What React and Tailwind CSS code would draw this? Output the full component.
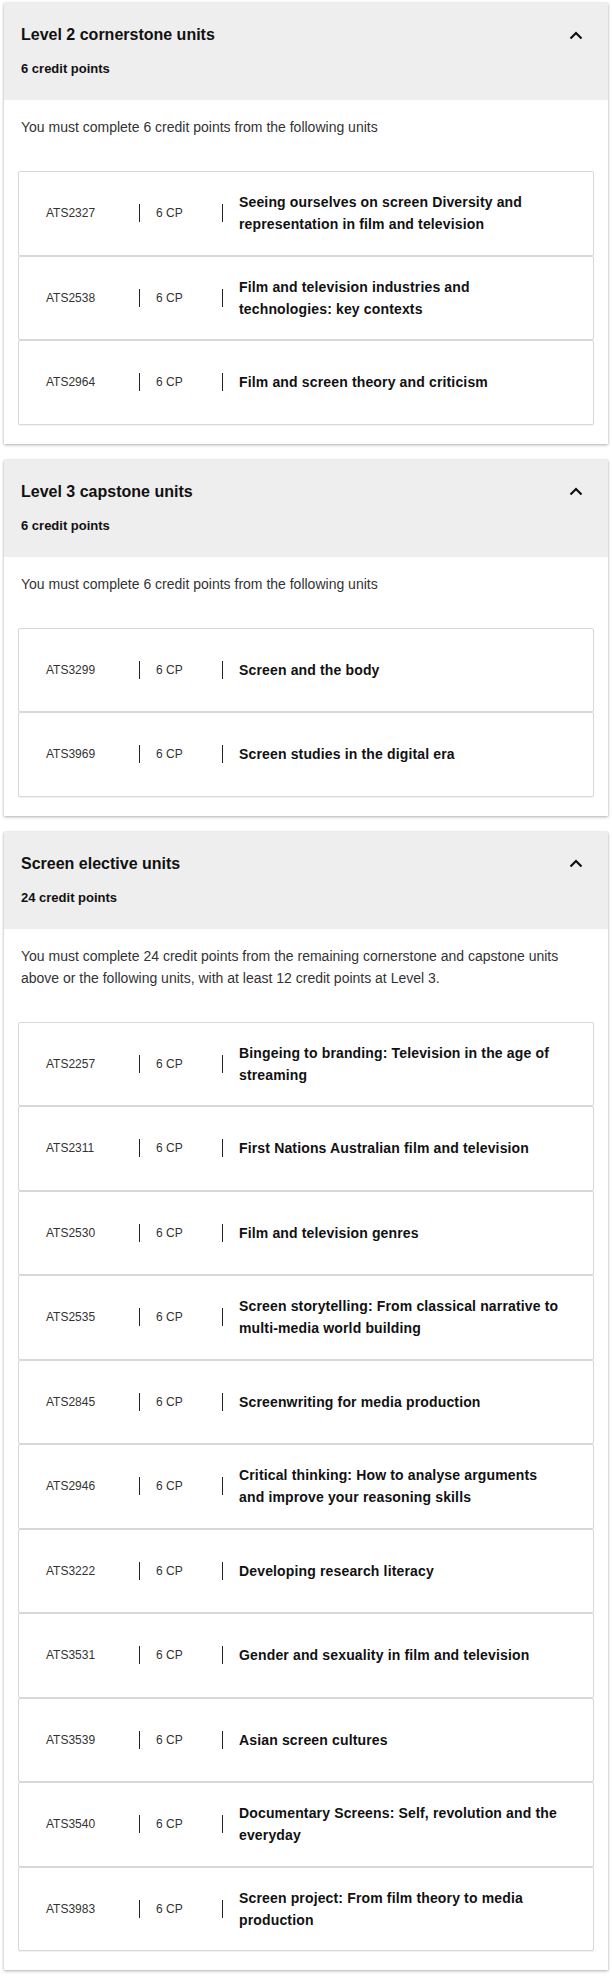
import React from 'react';

const sections = [
  {
    title: 'Level 2 cornerstone units',
    credits: '6 credit points',
    intro: 'You must complete 6 credit points from the following units',
    units: [
      ['ATS2327', 'Seeing ourselves on screen Diversity and representation in film and television'],
      ['ATS2538', 'Film and television industries and technologies: key contexts'],
      ['ATS2964', 'Film and screen theory and criticism'],
    ],
  },
  {
    title: 'Level 3 capstone units',
    credits: '6 credit points',
    intro: 'You must complete 6 credit points from the following units',
    units: [
      ['ATS3299', 'Screen and the body'],
      ['ATS3969', 'Screen studies in the digital era'],
    ],
  },
  {
    title: 'Screen elective units',
    credits: '24 credit points',
    intro:
      'You must complete 24 credit points from the remaining cornerstone and capstone units above or the following units, with at least 12 credit points at Level 3.',
    units: [
      ['ATS2257', 'Bingeing to branding: Television in the age of streaming'],
      ['ATS2311', 'First Nations Australian film and television'],
      ['ATS2530', 'Film and television genres'],
      ['ATS2535', 'Screen storytelling: From classical narrative to multi-media world building'],
      ['ATS2845', 'Screenwriting for media production'],
      ['ATS2946', 'Critical thinking: How to analyse arguments and improve your reasoning skills'],
      ['ATS3222', 'Developing research literacy'],
      ['ATS3531', 'Gender and sexuality in film and television'],
      ['ATS3539', 'Asian screen cultures'],
      ['ATS3540', 'Documentary Screens: Self, revolution and the everyday'],
      ['ATS3983', 'Screen project: From film theory to media production'],
    ],
  },
];

function Chevron() {
  return (
    <svg width="14" height="9" viewBox="0 0 14 9" className="mr-[8px]">
      <polyline points="1.5,7.5 7,2 12.5,7.5" fill="none" stroke="#111" strokeWidth="2.2" />
    </svg>
  );
}

function UnitRow({ code, name }) {
  return (
    <div className="flex items-center h-[84.5px] bg-white border border-[#d8d8d8] rounded-[2px] shadow-[0_1px_1px_rgba(0,0,0,0.06)] pl-[27px] pr-[30px]">
      <span className="w-[93px] shrink-0 text-[12px] text-[#333]">{code}</span>
      <span className="w-px h-[18px] bg-[#222] shrink-0" />
      <span className="w-[82px] shrink-0 pl-4 text-[12px] text-[#333]">6 CP</span>
      <span className="w-px h-[18px] bg-[#222] shrink-0" />
      <span className="flex-1 pl-4 text-[14px] font-bold leading-[22px] tracking-[0.15px] text-[#111]">
        {name}
      </span>
    </div>
  );
}

function Section({ section }) {
  return (
    <div className="bg-white shadow-[0_1px_3px_rgba(0,0,0,0.3),0_0_1px_rgba(0,0,0,0.15)]">
      <div className="bg-[#eeeeee] px-[17px] pt-5 pb-[21px]">
        <div className="flex items-center justify-between">
          <h2 className="text-[16px] leading-6 font-bold text-[#111]">{section.title}</h2>
          <Chevron />
        </div>
        <p className="mt-3 text-[13px] leading-5 font-bold text-[#111]">{section.credits}</p>
      </div>
      <div className="px-[14px] pt-4 pb-[19px]">
        <p className="px-[3px] mb-[33px] text-[14px] leading-[22px] text-[#333]">{section.intro}</p>
        <div>
          {section.units.map(([code, name]) => (
            <UnitRow key={code} code={code} name={name} />
          ))}
        </div>
      </div>
    </div>
  );
}

export default function App() {
  return (
    <div className="min-h-screen bg-white px-[4px] pt-[3px] pb-4 font-['Liberation_Sans',Arial,sans-serif] flex flex-col gap-4">
      {sections.map((s) => (
        <Section key={s.title} section={s} />
      ))}
    </div>
  );
}
